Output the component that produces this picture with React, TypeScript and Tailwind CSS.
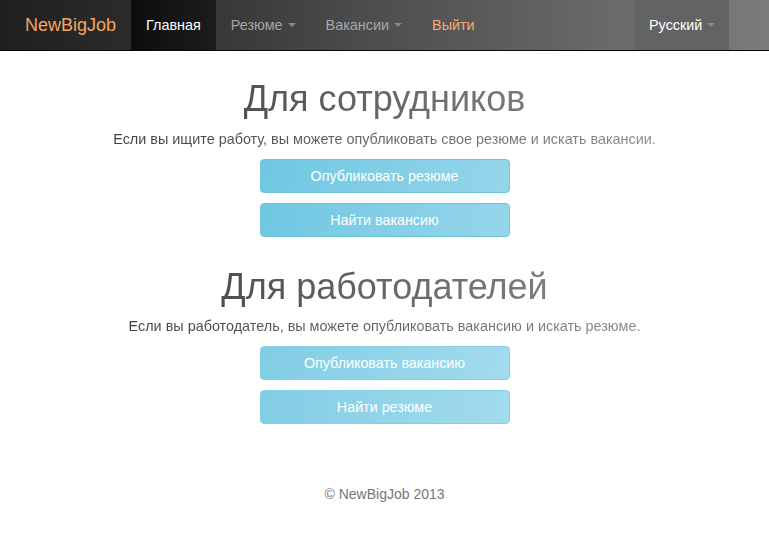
import React from "react";

const Caret = () => (
  <span className="ml-[5px] inline-block h-0 w-0 border-x-[4px] border-t-[4px] border-x-transparent border-t-[#888] align-middle" />
);

const grad = "text-transparent bg-clip-text bg-[linear-gradient(to_right,#2e2e2e,#666_50%,#9a9a9a)]";

function Btn({ label, light }: { label: string; light?: boolean }) {
  return (
    <button
      className={
        "block w-[250px] h-[34px] rounded-[4px] border text-[14.3px] leading-[20px] text-white " +
        (light
          ? "border-[#86d0e6] bg-[linear-gradient(100deg,#82cde5,#a2dbed)]"
          : "border-[#70c6e1] bg-[linear-gradient(100deg,#6fc7e2,#96d5ea)]")
      }
    >
      {label}
    </button>
  );
}

export default function App() {
  return (
    <div className="min-h-[549px] bg-white font-['Liberation_Sans',Arial,sans-serif]">
      <nav className="flex h-[51px] border-b border-[#0a0a0a] bg-[linear-gradient(to_right,#1f1f1f,#2c2c2c_18%,#4a4a4a_45%,#6a6a6a_80%,#7b7b7b)] text-[14.4px] leading-[20px]">
        <div className="flex items-center pl-[25px] pr-[15px] text-[18px] text-[#f5a55f]">NewBigJob</div>
        <div className="flex items-center bg-[linear-gradient(to_right,#0d0d0d,#1c1c1c)] px-[15px] text-white">Главная</div>
        <div className="flex items-center px-[15px] text-[#a6a6a6]">
          Резюме
          <Caret />
        </div>
        <div className="flex items-center px-[15px] text-[#a8a8a8]">
          Вакансии
          <Caret />
        </div>
        <div className="flex items-center px-[15px] text-[#f5ac72]">Выйти</div>
        <div className="flex-1" />
        <div className="mr-[40px] flex w-[95px] items-center bg-[#636363] pl-[15px] text-white">
          Русский
          <Caret />
        </div>
      </nav>

      <main className="flex flex-col items-center">
        <h1 className={"mt-[28px] w-full text-center text-[36px] leading-[40px] " + grad}>Для сотрудников</h1>
        <p className={"mt-[10px] w-full text-center text-[14.4px] leading-[20px] " + grad}>
          Если вы ищите работу, вы можете опубликовать свое резюме и искать вакансии.
        </p>
        <div className="mt-[10px] flex flex-col gap-[10px]">
          <Btn label="Опубликовать резюме" />
          <Btn label="Найти вакансию" />
        </div>

        <h1 className={"mt-[30px] w-full text-center text-[36px] leading-[40px] " + grad}>Для работодателей</h1>
        <p className={"mt-[9px] w-full text-center text-[14.4px] leading-[20px] " + grad}>
          Если вы работодатель, вы можете опубликовать вакансию и искать резюме.
        </p>
        <div className="mt-[10px] flex flex-col gap-[10px]">
          <Btn label="Опубликовать вакансию" light />
          <Btn label="Найти резюме" light />
        </div>

        <footer className="mt-[60px] w-full text-center text-[14px] leading-[20px] text-[#777]">© NewBigJob 2013</footer>
      </main>
    </div>
  );
}
